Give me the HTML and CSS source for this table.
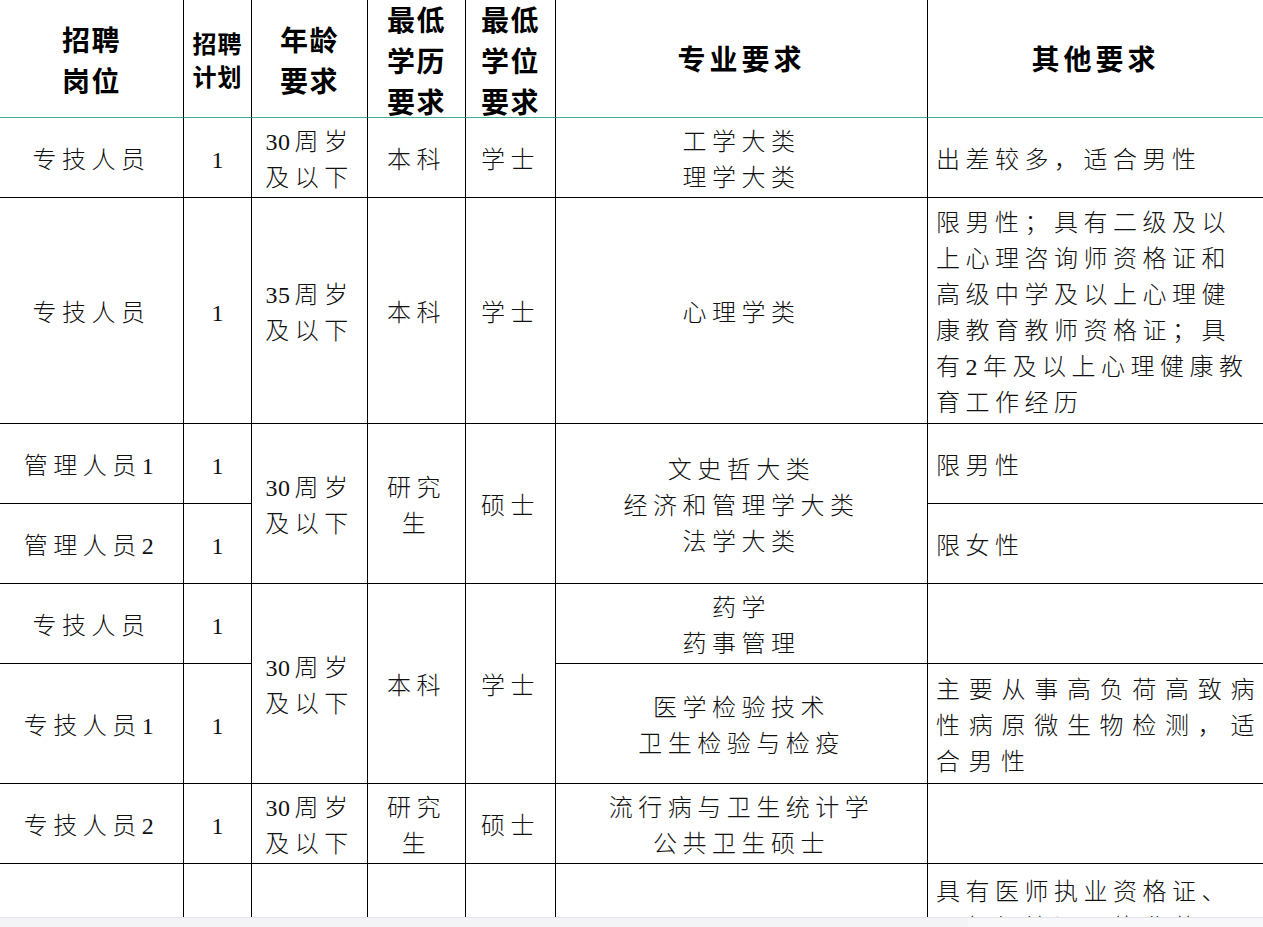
FILE: index.html
```html
<!DOCTYPE html>
<html lang="zh-CN">
<head>
<meta charset="utf-8">
<title>招聘岗位表</title>
<link rel="stylesheet" href="styles.css">
</head>
<body>
<div class="sheet">
<table class="jobs">
  <colgroup>
    <col class="c-post"><col class="c-plan"><col class="c-age"><col class="c-edu"><col class="c-deg"><col class="c-major"><col class="c-other">
  </colgroup>
  <thead>
    <tr class="r-head">
      <th><div class="h2l">招聘<br>岗位</div></th>
      <th class="small"><div class="h2s">招聘<br>计划</div></th>
      <th><div class="h2l">年龄<br>要求</div></th>
      <th class="top"><div class="h3l">最低<br>学历<br>要求</div></th>
      <th class="top"><div class="h3l">最低<br>学位<br>要求</div></th>
      <th class="wide">专业要求</th>
      <th class="wide last">其他要求</th>
    </tr>
  </thead>
  <tbody>
    <tr class="r80">
      <td>专技人员</td>
      <td class="num">1</td>
      <td><span class="digits">30</span>周岁<br>及以下</td>
      <td>本科</td>
      <td>学士</td>
      <td>工学大类<br>理学大类</td>
      <td class="other">出差较多，适合男性</td>
    </tr>
    <tr class="r226">
      <td>专技人员</td>
      <td class="num">1</td>
      <td><span class="digits">35</span>周岁<br>及以下</td>
      <td>本科</td>
      <td>学士</td>
      <td>心理学类</td>
      <td class="other">限男性；具有二级及以上心理咨询师资格证和高级中学及以上心理健康教育教师资格证；具有2年及以上心理健康教育工作经历</td>
    </tr>
    <tr class="r80">
      <td>管理人员1</td>
      <td class="num">1</td>
      <td rowspan="2"><span class="digits">30</span>周岁<br>及以下</td>
      <td rowspan="2">研究生</td>
      <td rowspan="2">硕士</td>
      <td rowspan="2">文史哲大类<br>经济和管理学大类<br>法学大类</td>
      <td class="other">限男性</td>
    </tr>
    <tr class="r80">
      <td>管理人员2</td>
      <td class="num">1</td>
      <td class="other">限女性</td>
    </tr>
    <tr class="r80">
      <td>专技人员</td>
      <td class="num">1</td>
      <td rowspan="2"><span class="digits">30</span>周岁<br>及以下</td>
      <td rowspan="2">本科</td>
      <td rowspan="2">学士</td>
      <td>药学<br>药事管理</td>
      <td class="other"></td>
    </tr>
    <tr class="r120">
      <td>专技人员1</td>
      <td class="num">1</td>
      <td>医学检验技术<br>卫生检验与检疫</td>
      <td class="other just">主要从事高负荷高致病性病原微生物检测，适合男性</td>
    </tr>
    <tr class="r80">
      <td>专技人员2</td>
      <td class="num">1</td>
      <td><span class="digits">30</span>周岁<br>及以下</td>
      <td>研究生</td>
      <td>硕士</td>
      <td>流行病与卫生统计学<br>公共卫生硕士</td>
      <td class="other"></td>
    </tr>
    <tr class="r-last open">
      <td></td>
      <td class="num"></td>
      <td></td>
      <td></td>
      <td></td>
      <td></td>
      <td class="other">具有医师执业资格证、医师规培证，执业范围为内科或全科医学专业</td>
    </tr>
  </tbody>
</table>
</div>
<div class="hscroll"><div class="thumb"></div></div>
</body>
</html>
```

FILE: styles.css
```css
html, body {
  margin: 0;
  padding: 0;
  height: 927px;
  overflow: hidden;
  background: #ffffff;
}

.sheet {
  width: 1263px;
}

.jobs {
  table-layout: fixed;
  width: 1263px;
  border-collapse: separate;
  border-spacing: 0;
  font-family: "Liberation Serif", "Noto Sans CJK SC", serif;
  font-size: 24px;
  font-weight: 300;
  letter-spacing: 5.5px;
  line-height: 36px;
  color: #111111;
}

.c-post { width: 184px; }
.c-plan { width: 68px; }
.c-age { width: 116px; }
.c-edu { width: 98px; }
.c-deg { width: 90px; }
.c-major { width: 372px; }
.c-other { width: 335px; }

.jobs th,
.jobs td {
  box-sizing: border-box;
  text-align: center;
  vertical-align: middle;
  border-right: 1px solid #000000;
  border-bottom: 1px solid #000000;
}

.jobs td {
  padding: 4px 6px 0;
}

.jobs th:last-child,
.jobs td.other {
  border-right: none;
}

.r-head { height: 118px; }
.r80 { height: 80px; }
.r226 { height: 226px; }
.r120 { height: 120px; }
.r-last { height: 124px; }

.jobs th {
  padding: 0 4px;
  font-family: "Noto Sans CJK SC", sans-serif;
  font-weight: 700;
  font-size: 28px;
  letter-spacing: 1.5px;
  line-height: 41px;
  border-bottom: 1px solid #3faf9b;
  color: #000000;
}

.jobs th.top {
  vertical-align: top;
}

.jobs th.wide {
  font-size: 28px;
  letter-spacing: 4px;
}

.jobs th.small {
  font-size: 24px;
  letter-spacing: 1px;
  padding: 0 2px;
}

.h2l {
  line-height: 41px;
  padding-top: 2px;
}

.h2s {
  line-height: 33px;
}

.h3l {
  line-height: 41px;
  margin: -1px 0 -6px;
}

.digits {
  letter-spacing: 0.5px;
  margin-right: 4px;
}

.num {
  letter-spacing: 0;
}

.jobs td.other {
  text-align: left;
  padding: 4px 14px 0 8px;
}

.jobs td.just {
  text-align: justify;
  letter-spacing: 8.5px;
  padding: 4px 0 0 8px;
}

.open td {
  border-bottom: none;
}

.hscroll {
  position: fixed;
  left: 0;
  right: 0;
  bottom: 0;
  height: 9px;
  background: #f3f4f6;
  border-top: 1px solid #e3e4e7;
}

.thumb {
  margin-left: 968px;
  width: 295px;
  height: 9px;
  background: #f7f8f9;
}
```
